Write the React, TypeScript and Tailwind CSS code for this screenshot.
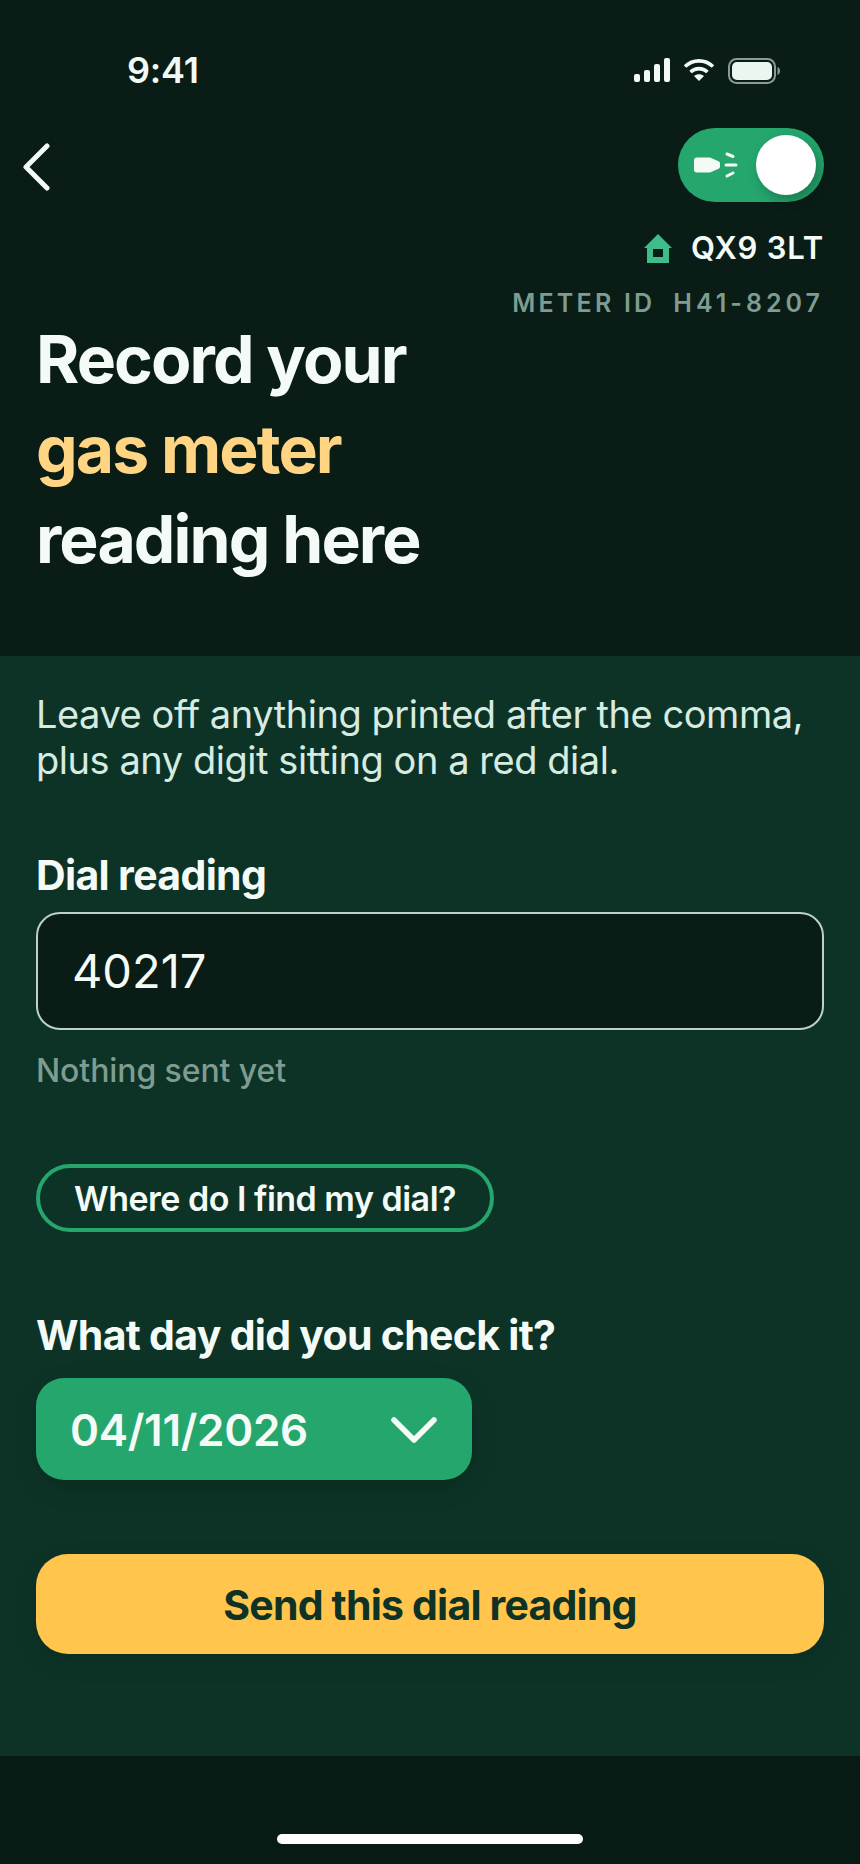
const font = { fontFamily: "Inter, 'Liberation Sans', sans-serif" };

function StatusBar() {
    return (
        <div className="flex h-[116px] items-start justify-between pl-[127px] pr-[80px] pt-[50px]">
            <span className="text-[36px] leading-[40px] font-semibold tracking-[-0.2px] text-[#f1faf5]">9:41</span>
            <div className="flex items-start gap-[13px] pt-[8px]">
                <svg width="36" height="24" viewBox="0 0 36 24" fill="#f1faf5">
                    <rect x="0" y="16" width="6" height="8" rx="2" />
                    <rect x="10" y="12" width="6" height="12" rx="2" />
                    <rect x="20" y="6" width="6" height="18" rx="2" />
                    <rect x="30" y="0" width="6" height="24" rx="2" />
                </svg>
                <svg width="32" height="24" viewBox="0 0 32 24" fill="none" stroke="#f1faf5" strokeWidth="3.6">
                    <path d="M2 8.5C10 1 22 1 30 8.5" />
                    <path d="M7.5 14C12.500 9.500 19.500 9.500 24.500 14" />
                    <path d="M16 23l-5-5c3-2.400 7-2.400 10 0z" fill="#f1faf5" stroke="none" />
                </svg>
                <svg width="52" height="26" viewBox="0 0 52 26" fill="none">
                    <rect x="1" y="1" width="46" height="24" rx="7.5" stroke="#8a9a94" strokeWidth="2" />
                    <rect x="4" y="4" width="40" height="18" rx="5" fill="#eaf7f0" />
                    <path d="M49.500 9c1.500.5 2.500 2 2.500 4s-1 3.500-2.500 4z" fill="#8a9a94" />
                </svg>
            </div>
        </div>
    );
}

function TorchToggle() {
    return (
        <div className="flex h-[74px] w-[146px] items-center justify-between rounded-full bg-[#24a66d] pl-[16px] pr-[8px]">
            <svg width="44" height="28" viewBox="0 0 44 28" fill="#f4fbf7">
                <path d="M3 6.500h13l8 3.500c1.300.6 2 1.200 2 2.500v3c0 1.300-.7 1.900-2 2.500l-8 3.500H3c-2 0-3-1-3-3v-9c0-2 1-3 3-3z" />
                <path d="M33 3l6 2.500M32 14h10M33 25l6-3" stroke="#f4fbf7" strokeWidth="3" strokeLinecap="round" fill="none" />
            </svg>
            <div className="h-[60px] w-[60px] rounded-full bg-white shadow-[4px_6px_12px_rgba(0,0,0,0.25)]" />
        </div>
    );
}

function Header() {
    return (
        <header className="h-[656px] bg-[#0a1c16]">
            <StatusBar />
            <div className="flex items-start justify-between pl-[22px] pr-[36px] pt-[12px]">
                <svg width="30" height="48" viewBox="0 0 30 48" fill="none" className="mt-[15px]" stroke="#f4fbf7" strokeWidth="5" strokeLinecap="round" strokeLinejoin="round">
                    <path d="M25 3L4 24l21 21" />
                </svg>
                <TorchToggle />
            </div>
            <div className="mt-[28px] flex items-center justify-end gap-[18px] pr-[36px]">
                <svg width="30" height="30" viewBox="0 0 30 30" fill="#3dbd8a">
                    <path fillRule="evenodd" d="M15 1L29 15h-3v15H4V15H1zM10 16v8h10v-8z" />
                </svg>
                <span className="text-[31px] leading-[36px] font-semibold tracking-[0.8px] text-[#f4fbf7]">QX9 3LT</span>
            </div>
            <div className="mt-[27px] flex justify-end gap-[18px] pr-[36px] text-[25px] leading-[21px] font-semibold text-[#7f9c90]">
                <span className="tracking-[3.200px]">METER ID</span>
                <span className="tracking-[4px]">H41-8207</span>
            </div>
            <h1 className="px-[36px] text-[66px] leading-[90px] font-bold tracking-[-1.900px] text-[#f4fbf7]">
                Record your
                <br />
                <span className="text-[#ffd584]">gas meter</span>
                <br />
                reading here
            </h1>
        </header>
    );
}

function ReadingForm() {
    return (
        <main className="flex h-[1100px] flex-col items-start bg-[#0d3327] px-[36px] pt-[35px]">
            <p className="text-[38px] leading-[46px] tracking-[-0.450px] text-[#d7ece1]">
                Leave off anything printed after the comma,
                <br />
                plus any digit sitting on a red dial.
            </p>
            <label className="mt-[67px] text-[41px] leading-[50px] font-bold tracking-[-0.650px] text-[#f4fbf7]">Dial reading</label>
            <div className="mt-[12px] flex h-[118px] w-[788px] items-center rounded-[24px] border-2 border-[#bcd1c7] bg-[#0a1c16] pl-[34px] text-[47px] text-[#f4fbf7]">
                40217
            </div>
            <p className="mt-[21px] text-[32px] leading-[40px] font-medium tracking-[-0.1px] text-[#7f9c90]">Nothing sent yet</p>
            <button className="mt-[73px] flex h-[68px] w-[458px] items-center justify-center rounded-full border-4 border-[#24a66d] text-[34px] font-semibold tracking-[-0.500px] text-[#f4fbf7]">
                Where do I find my dial?
            </button>
            <label className="mt-[78px] text-[41px] leading-[50px] font-bold tracking-[-0.700px] text-[#f4fbf7]">What day did you check it?</label>
            <button className="mt-[18px] flex h-[102px] w-[436px] items-center justify-between rounded-[28px] bg-[#24a66d] pl-[34px] pr-[35px] pt-[2px] text-[44px] font-semibold tracking-[-0.300px] text-[#f4fbf7] shadow-[0_8px_24px_rgba(0,0,0,0.15)]">
                04/11/2026
                <svg width="46" height="28" viewBox="0 0 46 28" fill="none" stroke="#f4fbf7" strokeWidth="5.500" strokeLinecap="round" strokeLinejoin="round">
                    <path d="M3 4l20 20L43 4" />
                </svg>
            </button>
            <button className="mt-[74px] flex h-[100px] w-[788px] items-center justify-center rounded-[32px] bg-[#ffc54d] pt-[3px] text-[41px] font-bold tracking-[-0.800px] text-[#0e3226] shadow-[0_8px_24px_rgba(0,0,0,0.12)]">
                Send this dial reading
            </button>
        </main>
    );
}

export default function App() {
    return (
        <div className="h-[1864px] w-[860px] overflow-hidden bg-[#071a14]" style={font}>
            <Header />
            <ReadingForm />
            <div className="flex h-[108px] items-start justify-center bg-[#071a14] pt-[78px]">
                <div className="h-[10px] w-[306px] rounded-full bg-white" />
            </div>
        </div>
    );
}
